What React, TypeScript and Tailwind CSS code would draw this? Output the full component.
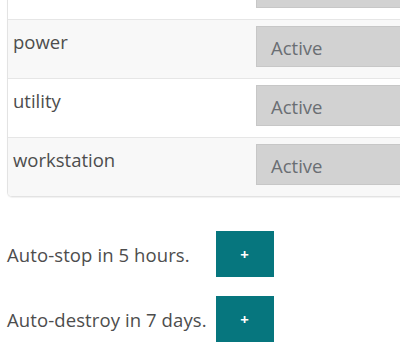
import React from 'react';

const rows = [
  { name: '', status: '' },
  { name: 'power', status: 'Active' },
  { name: 'utility', status: 'Active' },
  { name: 'workstation', status: 'Active' },
];

const timers = [
  { label: 'Auto-stop in 5 hours.' },
  { label: 'Auto-destroy in 7 days.' },
];

export default function App() {
  return (
    <div className="w-[400px] h-[351px] overflow-hidden bg-white font-['Open_Sans',sans-serif] text-[#4d4d4d]">
      <div className="ml-[7px] -mt-[39px] w-[440px] border border-t-0 border-[#e3e3e3] rounded-b-[5px] shadow-[0_1px_1px_rgba(0,0,0,0.06)] overflow-hidden">
        {rows.map((row, i) => (
          <div
            key={i}
            className={`flex items-start pl-[5px] pt-[6px] pb-[11px] ${i > 0 ? 'border-t border-[#e6e6e6]' : ''} ${i % 2 === 1 ? 'bg-[#f8f8f8]' : 'bg-white'}`}
          >
            <div className="w-[243px] text-[18.5px] leading-[27px] pt-[2px]">{row.name}</div>
            <div className="flex-1 h-[41px] bg-[#d2d2d2] border border-[#c7c7c7] flex items-center pl-[14px] pt-[2px] text-[18.5px] text-[#6a6e73]">
              {row.status}
            </div>
          </div>
        ))}
      </div>

      <div className="mt-[34px] ml-[7px] grid grid-cols-[auto_58px] gap-x-[9px] gap-y-[19px] items-center w-fit">
        {timers.map((t) => (
          <React.Fragment key={t.label}>
            <span className="text-[18.5px] leading-[27px] tracking-[0.1px]">{t.label}</span>
            <button className="h-[46px] bg-[#06767e] text-white text-[15px] font-bold flex items-center justify-center">
              +
            </button>
          </React.Fragment>
        ))}
      </div>
    </div>
  );
}
